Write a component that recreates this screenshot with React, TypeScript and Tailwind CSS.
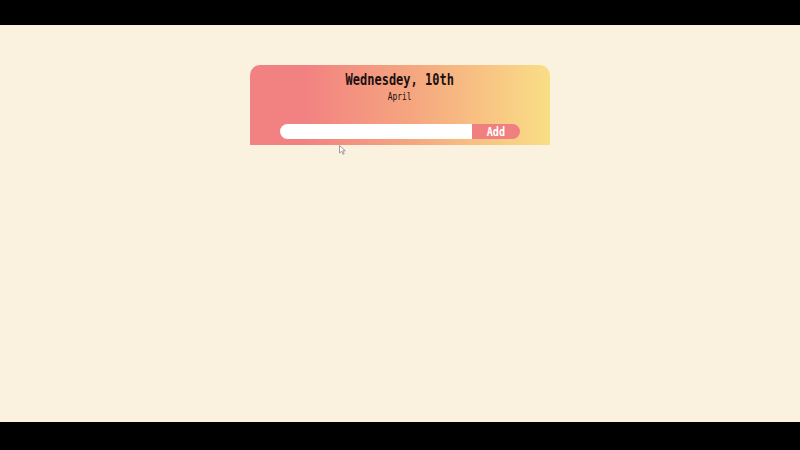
export default function App() {
  return (
    <div className="flex h-[450px] w-[800px] flex-col bg-black">
      <div className="h-[25px] shrink-0 bg-black" />
      <main className="relative flex h-[397px] shrink-0 flex-col items-center bg-[#fbf1df]">
        <section className="mt-[40px] flex h-[80px] w-[300px] flex-col items-center rounded-t-[10px] bg-gradient-to-r from-[#f28181] from-[18%] via-[#f5a77f] via-[55%] to-[#f9de86] font-['DejaVu_Sans_Mono',monospace]">
          <h1 className="mt-[6px] inline-block scale-x-[0.8] text-[15px] font-bold leading-[18px] text-[#1a1010]">
            Wednesdey, 10th
          </h1>
          <p className="mt-[1px] inline-block scale-x-[0.72] text-[11px] leading-[14px] text-[#1a1010]">April</p>
          <form className="mt-[20px] flex h-[15px] w-[240px]">
            <input className="h-full w-[192px] rounded-l-full bg-white outline-none" />
            <button
              type="button"
              className="flex h-full w-[48px] items-center justify-center rounded-r-full bg-[#f08080] text-[12px] font-bold text-white"
            >
              <span className="inline-block scale-x-[0.85]">Add</span>
            </button>
          </form>
        </section>
        <svg className="absolute left-[339px] top-[120px]" width="7" height="10" viewBox="0 0 7 10">
          <path d="M0.5 0.5 L0.5 8 L2.5 6.2 L4 9.3 L5.2 8.8 L3.8 5.8 L6.3 5.8 Z" fill="#fff" stroke="#888" strokeWidth="0.8" />
        </svg>
      </main>
      <div className="h-[28px] shrink-0 bg-black" />
    </div>
  )
}
